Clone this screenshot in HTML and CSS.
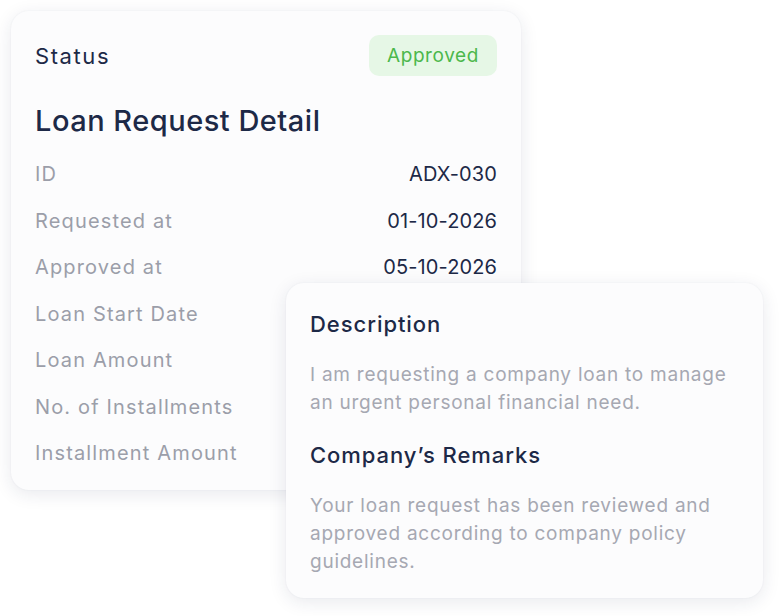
FILE: index.html
```html
<!DOCTYPE html>
<html>
<head>
<meta charset="utf-8">
<link rel="stylesheet" href="styles.css">
</head>
<body>
<div class="stage">
  <section class="card detail">
    <div class="status-row">
      <span class="status-label">Status</span>
      <span class="badge">Approved</span>
    </div>
    <h1 class="title">Loan Request Detail</h1>
    <div class="rows">
      <div class="row"><span class="label">ID</span><span class="value">ADX-030</span></div>
      <div class="row"><span class="label">Requested at</span><span class="value">01-10-2026</span></div>
      <div class="row"><span class="label">Approved at</span><span class="value">05-10-2026</span></div>
      <div class="row"><span class="label">Loan Start Date</span><span class="value"></span></div>
      <div class="row"><span class="label">Loan Amount</span><span class="value"></span></div>
      <div class="row"><span class="label">No. of Installments</span><span class="value"></span></div>
      <div class="row"><span class="label">Installment Amount</span><span class="value"></span></div>
    </div>
  </section>
  <section class="card notes">
    <h2 class="sub">Description</h2>
    <p class="text">I am requesting a company loan to manage an urgent personal financial need.</p>
    <h2 class="sub second">Company’s Remarks</h2>
    <p class="text">Your loan request has been reviewed and approved according to company policy guidelines.</p>
  </section>
</div>
</body>
</html>
```

FILE: styles.css
```css
html, body {
  margin: 0;
  padding: 0;
  background: #ffffff;
}
body {
  font-family: Inter, "Noto Sans", sans-serif;
  color: #1d2947;
}
.stage {
  position: relative;
  width: 780px;
  height: 616px;
  padding: 11px 0 0 11px;
  box-sizing: border-box;
}
.card {
  background: #fcfcfd;
  border-radius: 18px;
  box-shadow: 0 4px 18px rgba(30, 40, 80, 0.10), 0 0 2px rgba(30, 40, 80, 0.06);
  box-sizing: border-box;
}
.detail {
  width: 510px;
  height: 479px;
  padding: 24px 24px 0 24px;
}
.status-row {
  display: flex;
  justify-content: space-between;
  align-items: center;
  height: 41px;
}
.status-label {
  font-size: 22px;
  font-weight: 400;
  letter-spacing: 1.6px;
}
.badge {
  background: #e6f7e6;
  color: #4cb84c;
  font-size: 19px;
  letter-spacing: 0.6px;
  border-radius: 10px;
  height: 41px;
  padding: 0 18px;
  display: flex;
  align-items: center;
}
.title {
  margin: 25px 0 0 0;
  font-size: 29px;
  font-weight: 500;
  line-height: 40px;
  letter-spacing: 0.5px;
}
.rows {
  margin-top: 10px;
  display: flex;
  flex-direction: column;
}
.row {
  display: flex;
  justify-content: space-between;
  align-items: center;
  height: 46.5px;
  font-size: 20px;
}
.label {
  color: #9b9ea9;
  letter-spacing: 1.15px;
}
.value {
  color: #1d2947;
  letter-spacing: 0.1px;
}
.notes {
  position: absolute;
  left: 286px;
  top: 283px;
  width: 477px;
  height: 315px;
  padding: 24px 24px 0 24px;
}
.sub {
  margin: 0;
  font-size: 22px;
  font-weight: 500;
  line-height: 34px;
  letter-spacing: 0.95px;
}
.sub.second {
  margin-top: 21px;
}
.text {
  margin: 20px 0 0 0;
  font-size: 19px;
  line-height: 28px;
  color: #a6a8b2;
  letter-spacing: 0.75px;
}
```
